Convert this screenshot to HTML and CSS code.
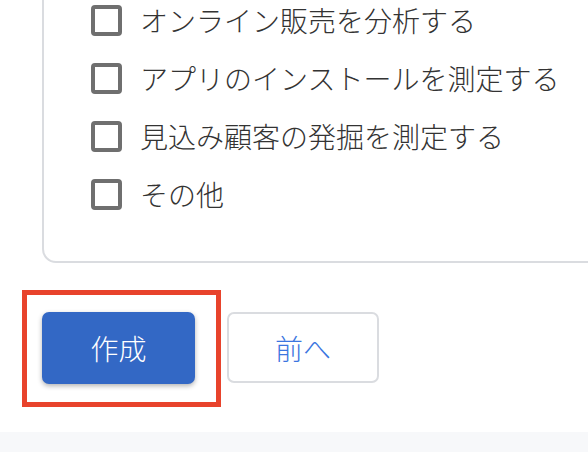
FILE: index.html
```html
<!DOCTYPE html>
<html lang="ja">
<head>
  <meta charset="UTF-8">
  <meta name="viewport" content="width=device-width, initial-scale=1.0">
  <title>目的の選択</title>
  <link rel="stylesheet" href="styles.css">
</head>
<body>
  <div class="page">
    <div class="card">
      <label class="option"><span class="box"></span>オンライン販売を分析する</label>
      <label class="option"><span class="box"></span>アプリのインストールを測定する</label>
      <label class="option"><span class="box"></span>見込み顧客の発掘を測定する</label>
      <label class="option"><span class="box"></span>その他</label>
    </div>

    <div class="actions">
      <div class="highlight">
        <button class="btn btn-primary" type="button">作成</button>
      </div>
      <button class="btn btn-outline" type="button">前へ</button>
    </div>
  </div>
  <div class="footer"></div>
</body>
</html>
```

FILE: styles.css
```css
body {
  margin: 0;
  padding: 0;
  background-color: #fff;
  font-family: "Noto Sans CJK JP", "Noto Sans", sans-serif;
  font-weight: 300;
  color: #333;
  overflow: hidden;
}

.page {
  padding-left: 42px;
  padding-bottom: 48px;
  overflow: hidden;
}

.card {
  margin-top: -30px;
  margin-right: -40px;
  padding: 19px 0 38px 47px;
  border: 2px solid #dadce0;
  border-radius: 14px;
}

.option {
  display: flex;
  align-items: center;
  gap: 18px;
  height: 58px;
  font-size: 28px;
  line-height: 1;
  color: #333;
}

.box {
  box-sizing: border-box;
  width: 31px;
  height: 31px;
  border: 4px solid #6f6f6f;
  border-radius: 4px;
  flex-shrink: 0;
}

.actions {
  display: flex;
  gap: 32px;
  margin-top: 49px;
}

.highlight {
  position: relative;
}

.highlight::after {
  content: "";
  position: absolute;
  top: -22px;
  left: -20px;
  right: -26px;
  bottom: -23px;
  border: 5px solid #e8432c;
  pointer-events: none;
}

.btn {
  font-family: inherit;
  font-weight: 300;
  font-size: 28px;
  height: 72px;
  border-radius: 7px;
  cursor: pointer;
}

.btn-primary {
  width: 153px;
  background-color: #3368c5;
  color: #fff;
  border: none;
  box-shadow: 0 2px 5px rgba(0, 0, 0, 0.3);
}

.btn-outline {
  width: 152px;
  height: 71px;
  background-color: #fff;
  color: #3b76e0;
  border: 2px solid #dadce0;
}

.footer {
  height: 20px;
  background-color: #f7f8fa;
}
```
